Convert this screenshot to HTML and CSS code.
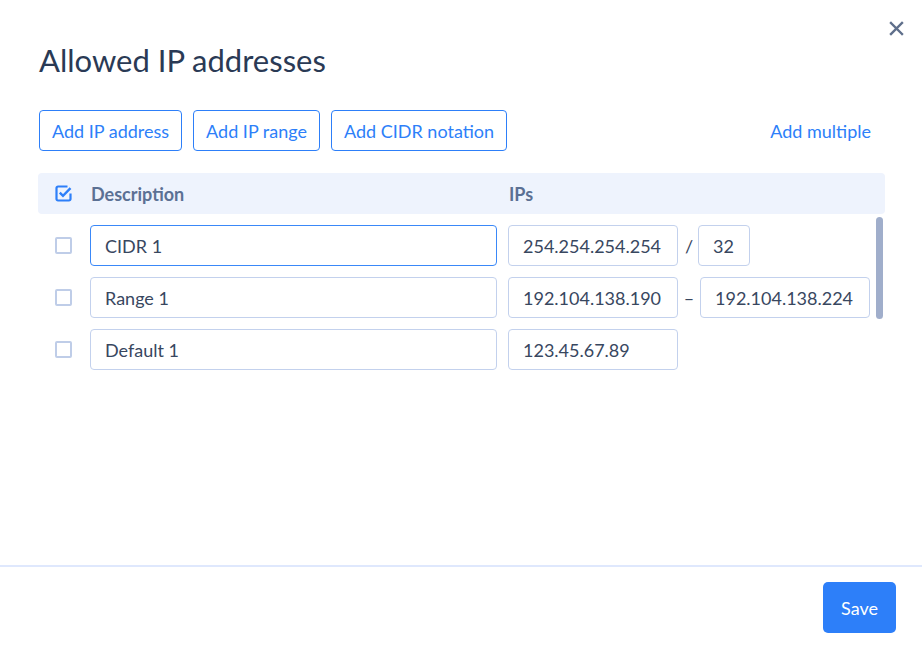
FILE: index.html
```html
<!DOCTYPE html>
<html lang="en">
<head>
    <meta charset="UTF-8">
    <meta name="viewport" content="width=device-width, initial-scale=1.0">
    <title>Allowed IP addresses</title>
    <link rel="stylesheet" href="styles.css">
</head>
<body>
    <div class="dialog">
        <button class="close-button" aria-label="Close">
            <svg width="15" height="15" viewBox="0 0 15 15"><path d="M2 2L13 13M13 2L2 13" stroke="#5f6f8b" stroke-width="2.4" stroke-linecap="square"/></svg>
        </button>

        <div class="dialog-body">
            <h1>Allowed IP addresses</h1>

            <div class="toolbar">
                <button class="outline-button">Add IP address</button>
                <button class="outline-button">Add IP range</button>
                <button class="outline-button">Add CIDR notation</button>
                <a class="link-button" href="#">Add multiple</a>
            </div>

            <div class="table-head">
                <div class="check-cell">
                    <span class="checkbox checked">
                        <svg width="17" height="17" viewBox="0 0 17 17"><path d="M12.5 1.5H3A1.5 1.5 0 0 0 1.5 3v11A1.5 1.5 0 0 0 3 15.5h11a1.5 1.5 0 0 0 1.5-1.5V8.5" fill="none" stroke="#2d7ff9" stroke-width="2.2"/><path d="M4.8 7.6l3.2 3.2 7.5-7.6" fill="none" stroke="#2d7ff9" stroke-width="2.4"/></svg>
                    </span>
                </div>
                <div class="desc-cell">Description</div>
                <div class="ip-cell">IPs</div>
            </div>

            <div class="rows">
                <div class="row">
                    <div class="check-cell"><span class="checkbox"></span></div>
                    <input class="field desc-field focused" type="text" value="CIDR 1">
                    <input class="field ip-field" type="text" value="254.254.254.254">
                    <span class="sep">/</span>
                    <input class="field mask-field" type="text" value="32">
                </div>
                <div class="row">
                    <div class="check-cell"><span class="checkbox"></span></div>
                    <input class="field desc-field" type="text" value="Range 1">
                    <input class="field ip-field" type="text" value="192.104.138.190">
                    <span class="sep">–</span>
                    <input class="field ip-field" type="text" value="192.104.138.224">
                </div>
                <div class="row">
                    <div class="check-cell"><span class="checkbox"></span></div>
                    <input class="field desc-field" type="text" value="Default 1">
                    <input class="field ip-field" type="text" value="123.45.67.89">
                </div>

                <!-- scrollbar thumb drawn over the list -->
                <div class="scroll-thumb"></div>
            </div>
        </div>

        <div class="dialog-footer">
            <button class="save-button">Save</button>
        </div>
    </div>
</body>
</html>
```

FILE: styles.css
```css
/* Basic styling */
body {
    font-family: Lato, "Open Sans", sans-serif;
    margin: 0;
    background-color: white;
    color: #2b3a55;
}
.dialog {
    position: relative;
    display: flex;
    flex-direction: column;
    min-height: 100vh;
}
.close-button {
    position: absolute;
    top: 21px;
    right: 18px;
    padding: 0;
    border: none;
    background: none;
    cursor: pointer;
    line-height: 0;
}
.dialog-body {
    flex: 1;
    padding: 0 37px 0 38px;
}
h1 {
    font-size: 31px;
    font-weight: 400;
    color: #2a3a55;
    margin: 40px 0 0 1px;
    line-height: 40px;
}
.toolbar {
    display: flex;
    gap: 11px;
    margin-top: 30px;
    padding-left: 1px;
}
.outline-button {
    height: 41px;
    padding: 0 12px;
    font-family: inherit;
    font-size: 18px;
    color: #2d7ff9;
    background-color: white;
    border: 1.3px solid #2d7ff9;
    border-radius: 4px;
    cursor: pointer;
}
.link-button {
    margin-left: auto;
    align-self: center;
    margin-right: 14px;
    font-size: 18px;
    color: #2d7ff9;
    text-decoration: none;
}

/* Table */
.table-head {
    display: flex;
    align-items: center;
    height: 41px;
    margin-top: 22px;
    background-color: #eef3fd;
    border-radius: 4px;
    font-size: 18px;
    font-weight: 700;
    color: #5b7094;
}
.check-cell {
    width: 52px;
    flex-shrink: 0;
    padding-left: 17px;
    box-sizing: border-box;
    display: flex;
    align-items: center;
}
.desc-cell {
    width: 418px;
    padding-left: 1px;
}
.checkbox {
    display: inline-block;
    width: 17px;
    height: 17px;
    box-sizing: border-box;
    border: 2px solid #bfcde8;
    border-radius: 2px;
}
.checkbox.checked {
    border: none;
    line-height: 0;
}
.rows {
    position: relative;
    display: flex;
    flex-direction: column;
    gap: 11px;
    margin-top: 11px;
}
.row {
    display: flex;
    align-items: center;
}
.field {
    height: 41px;
    box-sizing: border-box;
    padding: 0 14px;
    font-family: inherit;
    font-size: 18px;
    color: #38475f;
    border: 1px solid #c3d1ed;
    border-radius: 4px;
    background-color: white;
    outline: none;
}
.field.focused {
    border-color: #3a88f8;
}
.desc-field {
    width: 407px;
    margin-right: 11px;
}
.ip-field {
    width: 170px;
}
.mask-field {
    width: 52px;
}
.sep {
    width: 22px;
    text-align: center;
    font-size: 18px;
    color: #38475f;
}
.sep + .mask-field {
    margin-left: -2px;
}
.scroll-thumb {
    position: absolute;
    top: -8px;
    right: 2px;
    width: 7px;
    height: 102px;
    border-radius: 4px;
    background-color: #a0aecb;
}

/* Footer */
.dialog-footer {
    display: flex;
    justify-content: flex-end;
    border-top: 2px solid #dfe8fd;
    padding: 15px 26px 12px 0;
}
.save-button {
    width: 73px;
    height: 51px;
    font-family: inherit;
    font-size: 18px;
    color: white;
    background-color: #2d7ff9;
    border: none;
    border-radius: 5px;
    cursor: pointer;
}
```
